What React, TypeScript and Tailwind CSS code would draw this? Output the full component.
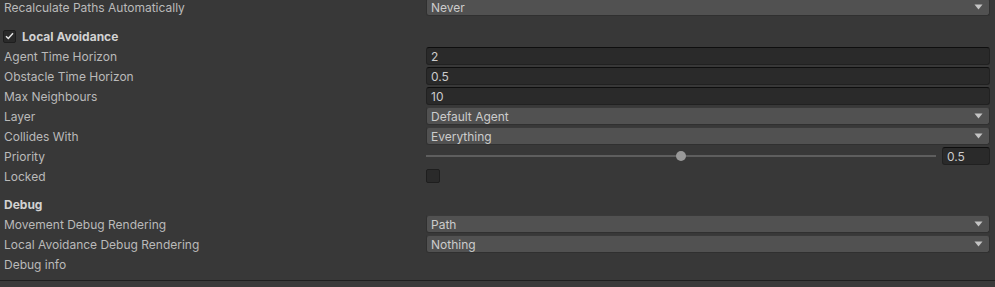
function Arrow() {
  return (
    <svg width="9" height="6" viewBox="0 0 9 6" className="shrink-0">
      <path d="M0.5 0.5 L8.5 0.5 L4.5 5.5 Z" fill="#c4c4c4" />
    </svg>
  );
}

function Dropdown({ value }: { value: string }) {
  return (
    <div className="flex h-[18px] items-center justify-between rounded-[3px] border border-[#303030] border-t-[#3a3a3a] bg-[#515151] pl-[4px] pr-[6px] text-[#cccccc]">
      <span className="mt-[2px]">{value}</span>
      <Arrow />
    </div>
  );
}

function Input({ value, className = "" }: { value: string; className?: string }) {
  return (
    <div
      className={`flex h-[18px] items-center rounded-[3px] border border-[#212121] border-t-[#0e0e0e] bg-[#2a2a2a] pl-[4px] text-[#cccccc] ${className}`}
    >
      <span className="mt-[2px]">{value}</span>
    </div>
  );
}

function Row({ label, children }: { label: string; children?: React.ReactNode }) {
  return (
    <div className="grid h-[20px] grid-cols-[426px_1fr] items-center pr-[5px]">
      <span className="mt-[2px] pl-[4px] text-[#bababa]">{label}</span>
      <div>{children}</div>
    </div>
  );
}

export default function App() {
  return (
    <div
      className="h-[287px] w-[995px] overflow-hidden bg-[#383838] text-[12px] leading-none"
      style={{ fontFamily: "Inter, 'Liberation Sans', sans-serif" }}
    >
      <div className="-mt-[3px]">
        <Row label="Recalculate Paths Automatically">
          <Dropdown value="Never" />
        </Row>

        <div className="mt-[9px] flex h-[20px] items-center gap-[6px] pl-[3px]">
          <div className="flex h-[13px] w-[13px] items-center justify-center rounded-[2px] border border-[#1e1e1e] bg-[#2a2a2a]">
            <svg width="9" height="8" viewBox="0 0 9 8">
              <path d="M1 4.2 L3.3 6.5 L8 1.2" stroke="#e4e4e4" strokeWidth="1.5" fill="none" />
            </svg>
          </div>
          <span className="mt-[2px] font-bold text-[#d2d2d2]">Local Avoidance</span>
        </div>

        <Row label="Agent Time Horizon">
          <Input value="2" />
        </Row>
        <Row label="Obstacle Time Horizon">
          <Input value="0.5" />
        </Row>
        <Row label="Max Neighbours">
          <Input value="10" />
        </Row>
        <Row label="Layer">
          <Dropdown value="Default Agent" />
        </Row>
        <Row label="Collides With">
          <Dropdown value="Everything" />
        </Row>
        <Row label="Priority">
          <div className="flex items-center gap-[6px]">
            <div className="relative h-[2px] flex-1 bg-[#5e5e5e]">
              <div className="absolute left-[250px] top-1/2 h-[10px] w-[10px] -translate-y-1/2 rounded-full bg-[#999999]" />
            </div>
            <Input value="0.5" className="w-[48px]" />
          </div>
        </Row>
        <Row label="Locked">
          <div className="h-[14px] w-[14px] rounded-[2px] border border-[#1e1e1e] bg-[#2a2a2a]" />
        </Row>

        <div className="mt-[8px] flex h-[20px] items-center pl-[4px] font-bold text-[#d2d2d2]">
          <span className="mt-[2px]">Debug</span>
        </div>
        <Row label="Movement Debug Rendering">
          <Dropdown value="Path" />
        </Row>
        <Row label="Local Avoidance Debug Rendering">
          <Dropdown value="Nothing" />
        </Row>
        <Row label="Debug info" />
        <div className="mt-[6px] h-[1px] bg-[#1f1f1f]" />
        <div className="h-[10px] bg-[#3a3a3a]" />
      </div>
    </div>
  );
}
